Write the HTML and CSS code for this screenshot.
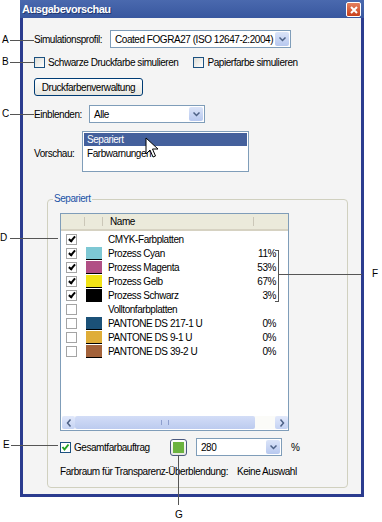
FILE: index.html
```html
<!doctype html>
<html>
<head>
    <meta charset="utf-8">
    <title>Ausgabevorschau</title>
    <link rel="stylesheet" href="styles.css">
</head>
<body>
    <div class="page">
        <div class="dialog">
            <div class="titlebar">
                <span class="title">Ausgabevorschau</span>
                <span class="close">
                    <svg width="12" height="12" viewBox="0 0 12 12"><path d="M3 3 L9 9 M9 3 L3 9" stroke="#fff" stroke-width="2"/></svg>
                </span>
            </div>
            <div class="content">
                <div class="row row-profile">
                    <span class="label label-profile">Simulationsprofil:</span>
                    <div class="select select-profile">
                        <span class="select-text">Coated FOGRA27 (ISO 12647-2:2004)</span>
                        <span class="drop"><svg width="7" height="5" viewBox="0 0 7 5"><path d="M0.5 0.5 L3.5 3.5 L6.5 0.5" fill="none" stroke="#4d6185" stroke-width="1.5"/></svg></span>
                    </div>
                </div>
                <div class="row row-checks">
                    <label class="check"><span class="box"></span>Schwarze Druckfarbe simulieren</label>
                    <label class="check check-paper"><span class="box"></span>Papierfarbe simulieren</label>
                </div>
                <div class="row">
                    <button class="btn">Druckfarbenverwaltung</button>
                </div>
                <div class="row row-show">
                    <span class="label label-show">Einblenden:</span>
                    <div class="select select-show">
                        <span class="select-text">Alle</span>
                        <span class="drop"><svg width="7" height="5" viewBox="0 0 7 5"><path d="M0.5 0.5 L3.5 3.5 L6.5 0.5" fill="none" stroke="#4d6185" stroke-width="1.5"/></svg></span>
                    </div>
                </div>
                <div class="row row-preview">
                    <span class="label label-preview">Vorschau:</span>
                    <div class="listbox">
                        <div class="list-item selected">Separiert</div>
                        <div class="list-item">Farbwarnungen</div>
                        <svg class="cursor" width="14" height="22" viewBox="0 0 14 22"><path d="M1 1 L1 17 L5 13 L8 20 L10.5 19 L7.5 12 L13 12 Z" fill="#fff" stroke="#000" stroke-width="1"/></svg>
                    </div>
                </div>

                <div class="group">
                    <div class="legend">Separiert</div>
                    <div class="listview">
                        <div class="lv-head">
                            <span class="hc hc-check"></span>
                            <span class="hc hc-swatch"></span>
                            <span class="hc hc-name">Name</span>
                            <span class="hc hc-pct"></span>
                        </div>
                        <div class="lv-body">
                            <div class="lv-row"><span class="cb on"></span><span class="sw none"></span><span class="nm">CMYK-Farbplatten</span><span class="pc"></span></div>
                            <div class="lv-row"><span class="cb on"></span><span class="sw cyan"></span><span class="nm">Prozess Cyan</span><span class="pc">11%</span></div>
                            <div class="lv-row"><span class="cb on"></span><span class="sw magenta"></span><span class="nm">Prozess Magenta</span><span class="pc">53%</span></div>
                            <div class="lv-row"><span class="cb on"></span><span class="sw yellow"></span><span class="nm">Prozess Gelb</span><span class="pc">67%</span></div>
                            <div class="lv-row"><span class="cb on"></span><span class="sw black"></span><span class="nm">Prozess Schwarz</span><span class="pc">3%</span></div>
                            <div class="lv-row"><span class="cb"></span><span class="sw none"></span><span class="nm">Volltonfarbplatten</span><span class="pc"></span></div>
                            <div class="lv-row"><span class="cb"></span><span class="sw pantone1"></span><span class="nm">PANTONE DS 217-1 U</span><span class="pc">0%</span></div>
                            <div class="lv-row"><span class="cb"></span><span class="sw pantone2"></span><span class="nm">PANTONE DS 9-1 U</span><span class="pc">0%</span></div>
                            <div class="lv-row"><span class="cb"></span><span class="sw pantone3"></span><span class="nm">PANTONE DS 39-2 U</span><span class="pc">0%</span></div>
                        </div>
                        <div class="hscroll">
                            <span class="arrow"><svg width="6" height="8" viewBox="0 0 6 8"><path d="M4.5 0.5 L1.5 4 L4.5 7.5" fill="none" stroke="#4d6185" stroke-width="1.5"/></svg></span>
                            <span class="thumb"><span class="grip"></span></span>
                            <span class="track"></span>
                            <span class="arrow"><svg width="6" height="8" viewBox="0 0 6 8"><path d="M1.5 0.5 L4.5 4 L1.5 7.5" fill="none" stroke="#4d6185" stroke-width="1.5"/></svg></span>
                        </div>
                    </div>
                    <div class="total-row">
                        <label class="check check-total"><span class="box green"><svg width="9" height="9" viewBox="0 0 9 9"><path d="M1.5 4 L3.5 6.5 L7.5 1.5" fill="none" stroke="#21a121" stroke-width="2"/></svg></span>Gesamtfarbauftrag</label>
                        <span class="colorbtn"><span class="colorfill"></span></span>
                        <div class="select select-total">
                            <span class="select-text">280</span>
                            <span class="drop"><svg width="7" height="5" viewBox="0 0 7 5"><path d="M0.5 0.5 L3.5 3.5 L6.5 0.5" fill="none" stroke="#4d6185" stroke-width="1.5"/></svg></span>
                        </div>
                        <span class="unit">%</span>
                    </div>
                    <div class="blend-row">
                        <span class="blend-label">Farbraum für Transparenz-Überblendung:</span>
                        <span class="blend-value">Keine Auswahl</span>
                    </div>
                </div>
            </div>
        </div>

        <!-- callout labels -->
        <span class="callout-letter" style="left:2px;top:34px">A</span>
        <span class="callout-line" style="left:10px;top:40px;width:24px"></span>
        <span class="callout-letter" style="left:2px;top:56px">B</span>
        <span class="callout-line" style="left:10px;top:62px;width:24px"></span>
        <span class="callout-letter" style="left:2px;top:108px">C</span>
        <span class="callout-line" style="left:10px;top:114px;width:24px"></span>
        <span class="callout-letter" style="left:0px;top:232px">D</span>
        <span class="callout-line" style="left:10px;top:238px;width:48px"></span>
        <span class="callout-letter" style="left:3px;top:439px">E</span>
        <span class="callout-line" style="left:11px;top:445px;width:47px"></span>
        <span class="bracket"></span>
        <span class="callout-line" style="left:279px;top:274px;width:83px"></span>
        <span class="callout-letter" style="left:372px;top:268px">F</span>
        <span class="callout-vline" style="left:178px;top:455px;height:50px"></span>
        <span class="callout-letter" style="left:175px;top:509px">G</span>
    </div>
</body>
</html>
```

FILE: styles.css
```css
body {
    margin: 0;
    background-color: #ffffff;
    font-family: 'Liberation Sans', Arial, sans-serif;
    font-size: 10px;
    letter-spacing: -0.45px;
    color: #000000;
}
.page {
    position: relative;
    width: 382px;
    height: 522px;
}
.dialog {
    margin-left: 20px;
    width: 338px;
    border: 3px solid #2b3c8f;
    border-top: none;
    background-color: #f4f4f4;
    height: 494px;
}
.titlebar {
    height: 18px;
    background: linear-gradient(#4a69ae, #38579f);
    display: flex;
    align-items: center;
    justify-content: space-between;
    padding: 0 3px 0 0;
    margin: 0 -3px;
}
.title {
    color: #ffffff;
    font-weight: bold;
    font-size: 11px;
    padding-left: 2px;
    text-shadow: 1px 1px 0 #213870;
}
.close {
    width: 13px;
    height: 13px;
    margin-top: 1px;
    background: linear-gradient(#e5805e, #c9401c);
    border: 1px solid #ffffff;
    border-radius: 2px;
    display: flex;
    align-items: center;
    justify-content: center;
}
.content {
    padding: 12px 0 0 11px;
}
.row {
    display: flex;
    align-items: center;
}
.label-profile {
    width: 76px;
}
.label-show {
    width: 55px;
}
.select {
    display: flex;
    align-items: center;
    height: 16px;
    background-color: #ffffff;
    border: 1px solid #7f9db9;
}
.select-text {
    flex: 1;
    padding-left: 4px;
    white-space: nowrap;
}
.drop {
    width: 14px;
    height: 14px;
    margin-right: 1px;
    background: linear-gradient(#dbe4f8, #b7c8ef);
    border-radius: 2px;
    display: flex;
    align-items: center;
    justify-content: center;
}
.select-profile {
    width: 179px;
}
.row-checks {
    margin-top: 9px;
}
.check {
    display: flex;
    align-items: center;
}
.box {
    width: 9px;
    height: 9px;
    border: 1px solid #1c5180;
    background: linear-gradient(135deg, #dcdcd6, #ffffff);
    margin-right: 3px;
    display: flex;
    align-items: center;
    justify-content: center;
}
.check-paper {
    margin-left: 15px;
}
.btn {
    margin-top: 10px;
    width: 109px;
    height: 18px;
    padding: 0;
    font-family: inherit;
    font-size: 10px;
    letter-spacing: -0.45px;
    background: linear-gradient(#ffffff, #e6e6e0);
    border: 1px solid #003c74;
    border-radius: 3px;
}
.row-show {
    margin-top: 9px;
}
.select-show {
    width: 114px;
}
.row-preview {
    margin-top: 8px;
}
.label-preview {
    width: 48px;
    margin-top: 4px;
}
.listbox {
    position: relative;
    width: 165px;
    height: 39px;
    background-color: #ffffff;
    border: 1px solid #7f9db9;
}
.list-item {
    height: 13px;
    line-height: 13px;
    padding-left: 3px;
    margin: 1px 1px 0 1px;
}
.list-item.selected {
    background-color: #44609c;
    color: #ffffff;
}
.cursor {
    position: absolute;
    left: 62px;
    top: 5px;
}
.group {
    position: relative;
    margin: 27px 0 0 13px;
    width: 301px;
    height: 289px;
    border: 1px solid #d0d0bf;
    border-radius: 4px;
    box-sizing: border-box;
    padding: 13px 0 0 12px;
}
.legend {
    position: absolute;
    left: 5px;
    top: -7px;
    padding: 0 1px;
    background-color: #f4f4f4;
    color: #2152a6;
}
.listview {
    width: 229px;
    height: 218px;
    border: 1px solid #7f9db9;
    background-color: #ffffff;
    box-sizing: border-box;
    display: flex;
    flex-direction: column;
}
.lv-head {
    display: flex;
    height: 17px;
    background-color: #ebeadb;
    border-bottom: 2px solid #d6d2c2;
    box-sizing: border-box;
}
.hc {
    display: flex;
    align-items: center;
    border-right: 1px solid #cbc7b8;
    margin: 3px 0;
}
.hc-check {
    width: 23px;
}
.hc-swatch {
    width: 17px;
}
.hc-name {
    width: 151px;
    padding-left: 7px;
    box-sizing: border-box;
}
.hc-pct {
    flex: 1;
    border-right: none;
}
.lv-body {
    flex: 1;
    padding-top: 1px;
}
.lv-row {
    display: flex;
    align-items: center;
    height: 14px;
}
.cb {
    width: 9px;
    height: 9px;
    margin-left: 5px;
    border: 1px solid #a4a4a4;
    position: relative;
}
.cb.on::after {
    content: "";
    position: absolute;
    left: 3px;
    top: 0px;
    width: 2px;
    height: 5px;
    border: solid #000000;
    border-width: 0 2px 2px 0;
    transform: rotate(40deg);
}
.sw {
    width: 16px;
    height: 13px;
    margin-left: 9px;
    box-sizing: border-box;
    border-bottom: 1px solid #000000;
}
.sw.none {
    border: none;
}
.cyan { background-color: #7ec8d4; }
.magenta { background-color: #b14f85; }
.yellow { background-color: #f1e316; }
.black { background-color: #000000; }
.pantone1 { background-color: #1b5178; }
.pantone2 { background-color: #dfad38; }
.pantone3 { background-color: #a3623a; }
.nm {
    padding-left: 6px;
    width: 150px;
    box-sizing: border-box;
}
.pc {
    width: 24px;
    text-align: right;
}
.hscroll {
    display: flex;
    height: 13px;
    margin: 0 0 1px 1px;
    background-color: #fbfbf8;
}
.arrow {
    width: 13px;
    height: 13px;
    background: linear-gradient(#e2e9fb, #c4d2f3);
    border-radius: 2px;
    display: flex;
    align-items: center;
    justify-content: center;
}
.thumb {
    width: 180px;
    height: 13px;
    background: linear-gradient(#d3ddf7, #bccbef);
    border-radius: 2px;
    display: flex;
    align-items: center;
    justify-content: center;
}
.grip {
    width: 6px;
    height: 5px;
    border-left: 1px solid #8e9fce;
    border-right: 1px solid #8e9fce;
    position: relative;
}
.track {
    flex: 1;
}
.total-row {
    display: flex;
    align-items: center;
    margin-top: 7px;
    height: 18px;
}
.check-total .box {
    border-color: #1c5180;
    background: #ffffff;
}
.check-total {
    width: 110px;
}
.colorbtn {
    width: 15px;
    height: 15px;
    border: 1px solid #4a587e;
    border-radius: 3px;
    background: linear-gradient(#ffffff, #e6e6e0);
    display: flex;
    align-items: center;
    justify-content: center;
}
.colorfill {
    width: 11px;
    height: 11px;
    background-color: #6cb340;
}
.select-total {
    margin-left: 9px;
    width: 84px;
}
.unit {
    margin-left: 9px;
}
.blend-row {
    margin-top: 10px;
    display: flex;
}
.blend-label {
    width: 177px;
}
.callout-letter {
    position: absolute;
    font-size: 10px;
}
.callout-line {
    position: absolute;
    height: 1px;
    background-color: #555555;
}
.callout-vline {
    position: absolute;
    width: 1px;
    background-color: #555555;
}
.bracket {
    position: absolute;
    left: 275px;
    top: 250px;
    width: 3px;
    height: 50px;
    border: 1px solid #555555;
    border-left: none;
}
```
